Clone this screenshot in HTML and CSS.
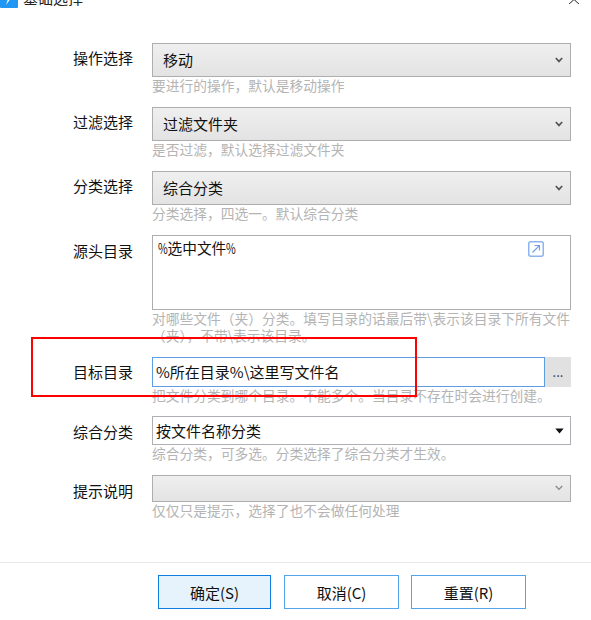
FILE: index.html
```html
<!DOCTYPE html>
<html lang="zh-CN">
<head>
<meta charset="utf-8">
<title>基础选择</title>
<link rel="stylesheet" href="styles.css">
</head>
<body>
<div class="dialog">
  <header class="titlebar">
    <div class="title-left">
      <svg class="app-icon" width="18" height="18" viewBox="0 0 18 18"><rect width="18" height="18" rx="1" fill="#2196f3"/><path d="M13 3 L8 9 L6 15 L11 8 Z" fill="#fff"/></svg>
      <span class="title-text">基础选择</span>
    </div>
    <svg class="close" width="14" height="14" viewBox="0 0 14 14"><path d="M1 15 L7 9.5 L13 15" fill="none" stroke="#222" stroke-width="1"/></svg>
  </header>
  <form class="form">
    <div class="row">
      <label class="label label-select">操作选择</label>
      <div class="control">
        <div class="select">移动<svg class="chev" width="8" height="6" viewBox="0 0 8 6"><path d="M0.8 1 L4 4.4 L7.2 1" fill="none" stroke="#555" stroke-width="1.7"/></svg></div>
        <div class="hint">要进行的操作，默认是移动操作</div>
      </div>
    </div>
    <div class="row">
      <label class="label label-select">过滤选择</label>
      <div class="control">
        <div class="select">过滤文件夹<svg class="chev" width="8" height="6" viewBox="0 0 8 6"><path d="M0.8 1 L4 4.4 L7.2 1" fill="none" stroke="#555" stroke-width="1.7"/></svg></div>
        <div class="hint">是否过滤，默认选择过滤文件夹</div>
      </div>
    </div>
    <div class="row">
      <label class="label label-select">分类选择</label>
      <div class="control">
        <div class="select">综合分类<svg class="chev" width="8" height="6" viewBox="0 0 8 6"><path d="M0.8 1 L4 4.4 L7.2 1" fill="none" stroke="#555" stroke-width="1.7"/></svg></div>
        <div class="hint">分类选择，四选一。默认综合分类</div>
      </div>
    </div>
    <div class="row">
      <label class="label label-area">源头目录</label>
      <div class="control">
        <div class="textarea"><span class="pct">%</span>选中文件<span class="pct">%</span>
          <svg class="expand" width="16" height="16" viewBox="0 0 16 16"><rect x="0.75" y="0.75" width="14.5" height="14.5" rx="2" fill="#fff" stroke="#8db4ee" stroke-width="1.5"/><path d="M4.5 11.5 L11 5 M6.5 4.5 H11.5 V9.5" fill="none" stroke="#6d9fe8" stroke-width="1.1"/></svg>
        </div>
        <div class="hint">对哪些文件（夹）分类。填写目录的话最后带\表示该目录下所有文件（夹），不带\表示该目录。</div>
      </div>
    </div>
    <div class="row row-tight">
      <label class="label label-target">目标目录</label>
      <div class="control">
        <div class="input-group">
          <div class="input">%所在目录%\这里写文件名</div>
          <div class="browse">...</div>
        </div>
        <div class="hint">把文件分类到哪个目录。不能多个。当目录不存在时会进行创建。</div>
      </div>
    </div>
    <div class="row">
      <label class="label label-combo">综合分类</label>
      <div class="control">
        <div class="combo">按文件名称分类<svg class="caret" width="9" height="6" viewBox="0 0 9 6"><path d="M0.3 0.5 H8.7 L4.5 5.5 Z" fill="#111"/></svg></div>
        <div class="hint">综合分类，可多选。分类选择了综合分类才生效。</div>
      </div>
    </div>
    <div class="row">
      <label class="label label-disabled">提示说明</label>
      <div class="control">
        <div class="select select-disabled"><svg class="chev" width="8" height="6" viewBox="0 0 8 6"><path d="M0.8 1 L4 4.4 L7.2 1" fill="none" stroke="#888" stroke-width="1.3"/></svg></div>
        <div class="hint">仅仅只是提示，选择了也不会做任何处理</div>
      </div>
    </div>
  </form>
  <footer class="footer">
    <button type="button" class="btn btn-primary">确定(S)</button>
    <button type="button" class="btn btn-cancel">取消(C)</button>
    <button type="button" class="btn btn-reset">重置(R)</button>
  </footer>
  <div class="highlight"></div>
</div>
</body>
</html>
```
FILE: styles.css
```css
* { box-sizing: border-box; }
html, body { margin: 0; padding: 0; background: #fff; }
body {
  width: 591px;
  height: 620px;
  overflow: hidden;
  font-family: "Noto Sans CJK SC", "Noto Sans", sans-serif;
  color: #111;
}
.dialog { position: relative; width: 591px; height: 620px; overflow: hidden; }

.titlebar {
  height: 53px;
  margin-top: -10px;
  display: flex;
  justify-content: space-between;
  align-items: flex-start;
}
.title-left { display: flex; align-items: center; height: 18px; }
.app-icon { display: block; }
.title-text { margin-left: 5px; font-size: 15px; line-height: 18px; color: #222; margin-top: -2px; }
.close { margin: 0 10px 0 0; }

.form { display: flex; flex-direction: column; }
.row { display: grid; grid-template-columns: 133px 419px; column-gap: 19px; margin-bottom: 13px; }
.row-tight { margin-bottom: 12px; }
.label { font-size: 15px; line-height: 20px; text-align: right; color: #111; }
.label-select { padding-top: 5px; }
.label-area { padding-top: 6px; }
.label-target { padding-top: 5px; }
.label-combo { padding-top: 6px; }
.label-disabled { padding-top: 6px; }
.control { min-width: 0; }

.select {
  height: 34px;
  border: 1px solid #aeaeae;
  background: linear-gradient(#efefef, #e3e3e3);
  padding: 0 7px 1px 10px;
  font-size: 15px;
  line-height: 20px;
  display: flex;
  align-items: center;
  justify-content: space-between;
}
.select-disabled { height: 27px; }
.chev { display: block; margin-left: auto; }
.hint { font-size: 13.75px; line-height: 17px; color: #b4b4b4; }

.textarea {
  position: relative;
  height: 75px;
  border: 1px solid #aeaeae;
  padding: 1px 5px;
  font-size: 14.7px;
  line-height: 22px;
  background: #fff;
}
.pct { display: inline-block; width: 9.5px; transform: scaleX(0.72); transform-origin: left center; }
.expand { position: absolute; top: 5px; right: 26px; }

.input-group { display: flex; height: 30px; }
.input {
  width: 393px;
  border: 1px solid #5c9ee0;
  padding-left: 3px;
  font-size: 15px;
  line-height: 28px;
}
.browse {
  flex: 1;
  background: #e1e1e1;
  font-size: 13px;
  line-height: 30px;
  text-align: center;
  color: #333;
}

.combo {
  height: 29px;
  border: 1px solid #aeaeb4;
  padding: 0 6px 0 3px;
  font-size: 15px;
  line-height: 25px;
  display: flex;
  align-items: center;
  justify-content: space-between;
}
.caret { display: block; }

.footer {
  position: absolute;
  left: 0;
  right: 0;
  top: 562px;
  border-top: 1px solid #eaeaea;
  padding: 12px 0 0 158px;
  display: flex;
}
.btn {
  height: 34px;
  width: 115px;
  padding: 0;
  border: 1px solid #56a3ee;
  background: #fff;
  font-family: inherit;
  font-size: 15px;
  color: #111;
}
.btn-primary { width: 113px; background: #e6f3fd; border-color: #0d7fdc; }
.btn-cancel { margin-left: 13px; }
.btn-reset { margin-left: 12px; }

.highlight {
  position: absolute;
  left: 31px;
  top: 337px;
  width: 386px;
  height: 60px;
  border: 2px solid #f00;
  pointer-events: none;
}
```
